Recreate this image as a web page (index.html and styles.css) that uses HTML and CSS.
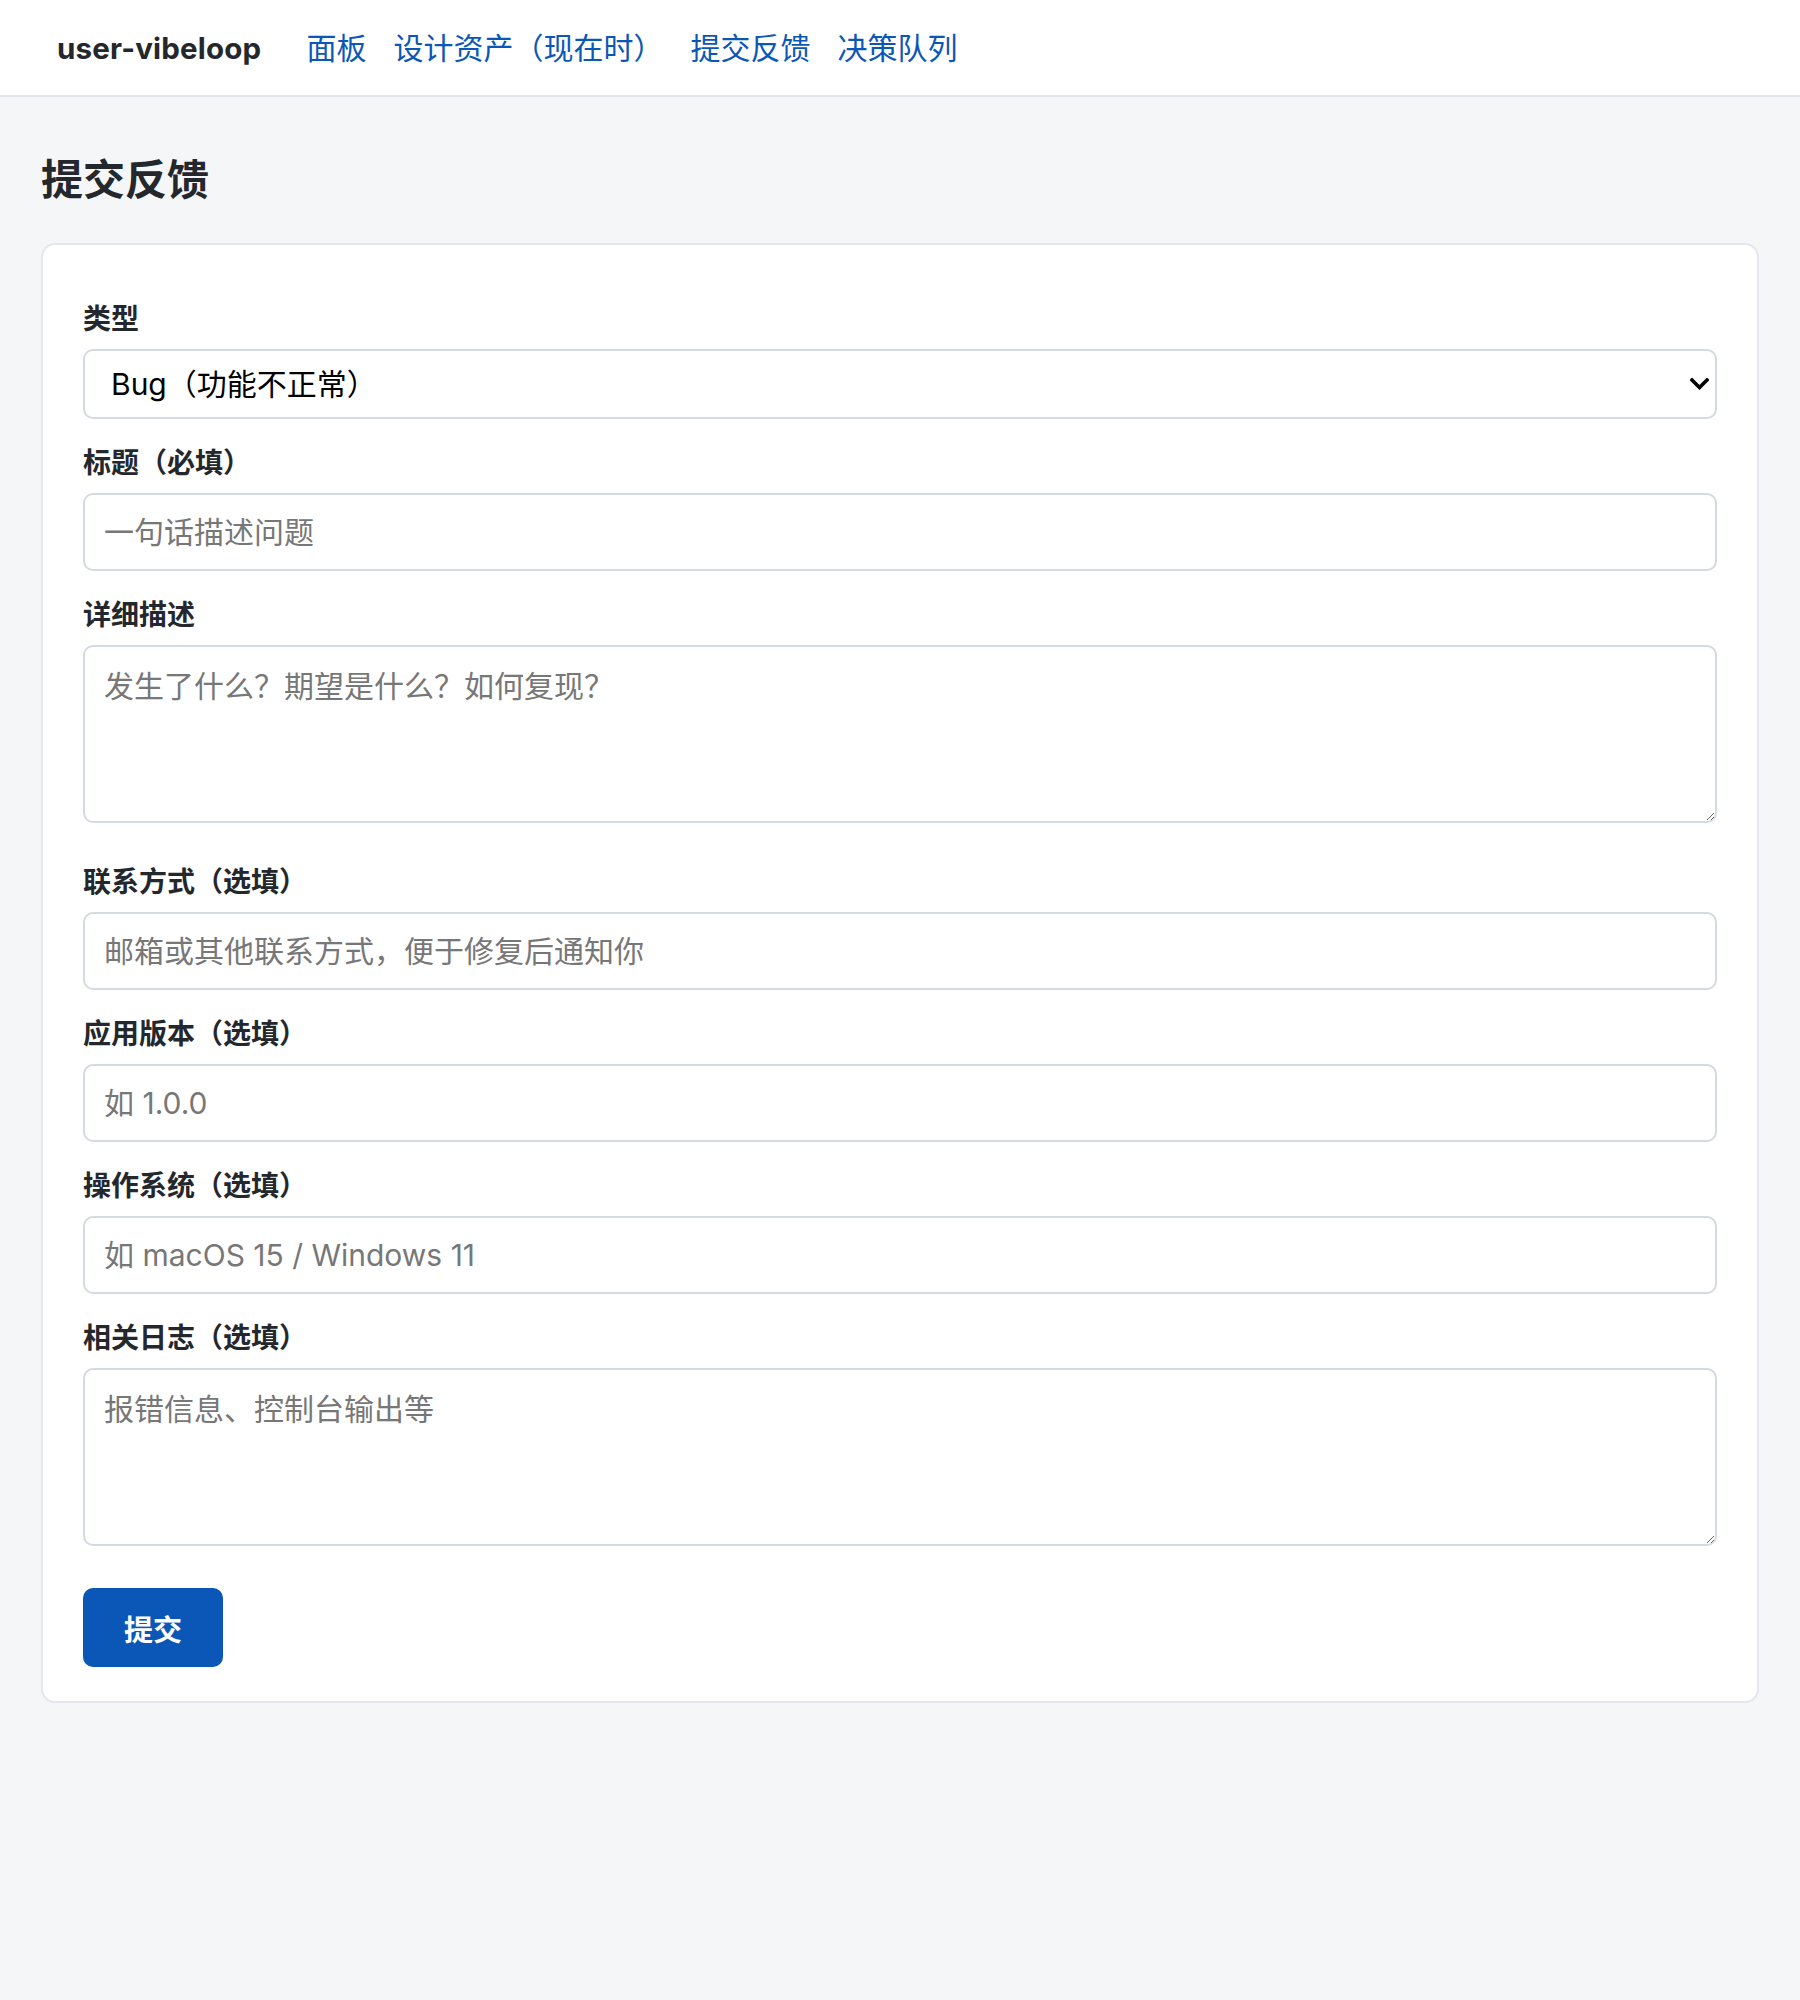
FILE: index.html
```html
<!DOCTYPE html>
<html lang="zh-CN">
<head>
<meta charset="utf-8">
<title>提交反馈 - user-vibeloop</title>
<link rel="stylesheet" href="styles.css">
</head>
<body>
<header class="topbar">
  <a class="brand" href="#">user-vibeloop</a>
  <nav class="nav">
    <a href="#">面板</a>
    <a href="#">设计资产（现在时）</a>
    <a href="#">提交反馈</a>
    <a href="#">决策队列</a>
  </nav>
</header>
<main class="page">
  <h1 class="title">提交反馈</h1>
  <form class="card">
    <label class="label first" for="kind">类型</label>
    <div class="select-wrap">
      <select id="kind" class="select">
        <option>Bug（功能不正常）</option>
        <option>建议</option>
        <option>其他</option>
      </select>
      <svg class="chevron" width="19" height="12" viewBox="0 0 19 12" aria-hidden="true">
        <path d="M2 2 L9.5 9.5 L17 2" fill="none" stroke="#000" stroke-width="3.6" stroke-linecap="square" stroke-linejoin="miter"/>
      </svg>
    </div>

    <label class="label" for="title">标题（必填）</label>
    <input id="title" class="input" type="text" placeholder="一句话描述问题">

    <label class="label" for="desc">详细描述</label>
    <textarea id="desc" class="input area" placeholder="发生了什么？期望是什么？如何复现？"></textarea>

    <label class="label" for="contact">联系方式（选填）</label>
    <input id="contact" class="input" type="text" placeholder="邮箱或其他联系方式，便于修复后通知你">

    <label class="label" for="ver">应用版本（选填）</label>
    <input id="ver" class="input" type="text" placeholder="如 1.0.0">

    <label class="label" for="os">操作系统（选填）</label>
    <input id="os" class="input" type="text" placeholder="如 macOS 15 / Windows 11">

    <label class="label" for="logs">相关日志（选填）</label>
    <textarea id="logs" class="input area" placeholder="报错信息、控制台输出等"></textarea>

    <div class="actions">
      <button type="button" class="btn">提交</button>
    </div>
  </form>
</main>
</body>
</html>
```

FILE: styles.css
```css
* {
  box-sizing: border-box;
}

html, body {
  margin: 0;
  padding: 0;
}

body {
  background: #f5f6f8;
  color: #24272c;
  font-family: Inter, "Noto Sans CJK SC", sans-serif;
  min-height: 2000px;
}

.topbar {
  height: 97px;
  background: #ffffff;
  border-bottom: 2px solid #e3e5ea;
  display: flex;
  align-items: center;
  padding-left: 57px;
}

.brand {
  font-size: 29.5px;
  font-weight: 700;
  color: #24272c;
  text-decoration: none;
  margin-right: 45px;
  letter-spacing: 0.2px;
}

.nav {
  display: flex;
  gap: 27px;
}

.nav a {
  font-size: 30px;
  color: #0b57b8;
  text-decoration: none;
  line-height: 40px;
}

.page {
  padding: 0 41px;
}

.title {
  margin: 58px 0 38px;
  font-size: 42px;
  line-height: 50px;
  font-weight: 700;
  color: #24272c;
}

.card {
  display: flex;
  flex-direction: column;
  background: #ffffff;
  border: 2px solid #e5e7ec;
  border-radius: 14px;
  padding: 56px 40px 34px;
}

.label {
  display: block;
  font-size: 28px;
  line-height: 36px;
  font-weight: 700;
  color: #24272c;
  margin: 26px 0 12px;
}

.label.first {
  margin-top: 0;
}

.select-wrap {
  position: relative;
}

.select {
  appearance: none;
  -webkit-appearance: none;
  display: block;
  width: 100%;
  height: 70px;
  padding: 0 60px 0 26px;
  font-family: Inter, "Noto Sans CJK SC", sans-serif;
  font-size: 30px;
  color: #000000;
  background: #ffffff;
  border: 2px solid #d5d9e1;
  border-radius: 10px;
  outline: none;
}

.chevron {
  position: absolute;
  right: 8px;
  top: 29px;
  pointer-events: none;
}

.input {
  display: block;
  width: 100%;
  height: 78px;
  padding: 0 19px;
  font-family: Inter, "Noto Sans CJK SC", sans-serif;
  font-size: 30px;
  color: #000000;
  background: #ffffff;
  border: 2px solid #d5d9e1;
  border-radius: 10px;
  outline: none;
}

.input::placeholder {
  color: #777777;
  opacity: 1;
}

.area {
  height: 178px;
  padding: 17px 19px;
  line-height: 44px;
  resize: vertical;
  margin-bottom: 15px;
}

.actions {
  display: flex;
  margin-top: 27px;
}

.btn {
  height: 79px;
  padding: 0 41px;
  background: #0a57b8;
  color: #ffffff;
  border: none;
  border-radius: 10px;
  font-family: Inter, "Noto Sans CJK SC", sans-serif;
  font-size: 29px;
  font-weight: 600;
  cursor: pointer;
}
```
